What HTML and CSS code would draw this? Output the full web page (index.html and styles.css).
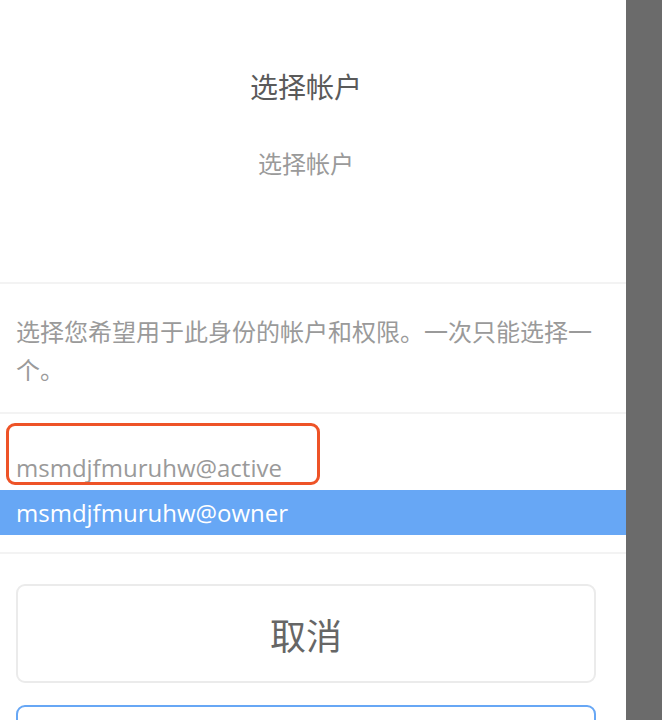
FILE: index.html
```html
<!DOCTYPE html>
<html lang="zh-CN">
<head>
<meta charset="utf-8">
<title>选择帐户</title>
<link rel="stylesheet" href="styles.css">
</head>
<body>
<div class="page">
  <main class="panel">
    <header class="head">
      <h1 class="title">选择帐户</h1>
      <p class="subtitle">选择帐户</p>
    </header>
    <p class="desc">选择您希望用于此身份的帐户和权限。一次只能选择一个。</p>
    <ul class="accounts">
      <li class="acct">msmdjfmuruhw@active</li>
      <li class="acct selected">msmdjfmuruhw@owner</li>
      <li class="mark" aria-hidden="true"></li>
    </ul>
    <div class="actions">
      <button class="btn cancel">取消</button>
      <button class="btn primary" aria-label="确定"></button>
    </div>
  </main>
  <aside class="shade"></aside>
</div>
</body>
</html>
```
FILE: styles.css
```css
* { box-sizing: border-box; }
html, body { margin: 0; padding: 0; }
body {
  width: 662px;
  height: 720px;
  overflow: hidden;
  background: #fff;
  font-family: "Open Sans", "Noto Sans CJK SC", sans-serif;
}
.page {
  display: flex;
  height: 720px;
}
.panel {
  width: 626px;
  flex: none;
  background: #fff;
}
.shade {
  flex: 1;
  background: #6b6b6b;
}
.head {
  height: 216px;
  padding: 66px 30px 0 16px;
  text-align: center;
  border-bottom: 2px solid #f3f3f3;
  box-sizing: content-box;
}
.title {
  margin: 0;
  font-family: "Noto Sans CJK SC", sans-serif;
  font-weight: 400;
  font-size: 28px;
  line-height: 40px;
  color: #5a5a5a;
}
.subtitle {
  margin: 40px 0 0;
  font-family: "Noto Sans CJK SC", sans-serif;
  font-size: 24px;
  line-height: 34px;
  color: #9a9a9a;
}
.desc {
  margin: 0;
  padding: 28px 30px 24px 16px;
  font-family: "Noto Sans CJK SC", sans-serif;
  font-size: 24px;
  line-height: 38px;
  color: #9a9a9a;
  border-bottom: 2px solid #f3f3f3;
}
.accounts {
  position: relative;
  list-style: none;
  margin: 0;
  padding: 31px 0 17px;
  border-bottom: 2px solid #f3f3f3;
}
.acct {
  height: 45px;
  line-height: 45px;
  padding-left: 16px;
  font-size: 24px;
  color: #9a9a9a;
}
.acct.selected {
  background: #67a7f5;
  color: #fff;
}
.mark {
  position: absolute;
  left: 6px;
  top: 9px;
  width: 314px;
  height: 62px;
  border: 3px solid #ee5327;
  border-radius: 9px;
}
.actions {
  display: flex;
  flex-direction: column;
  gap: 22px;
  padding: 30px 30px 0 16px;
}
.btn {
  display: block;
  width: 100%;
  height: 99px;
  border-radius: 9px;
  background: #fff;
  font-family: "Noto Sans CJK SC", sans-serif;
  font-size: 36px;
  color: #666;
  cursor: pointer;
}
.cancel { border: 2px solid #ebebeb; }
.primary { border: 2px solid #67a7f5; }
```
